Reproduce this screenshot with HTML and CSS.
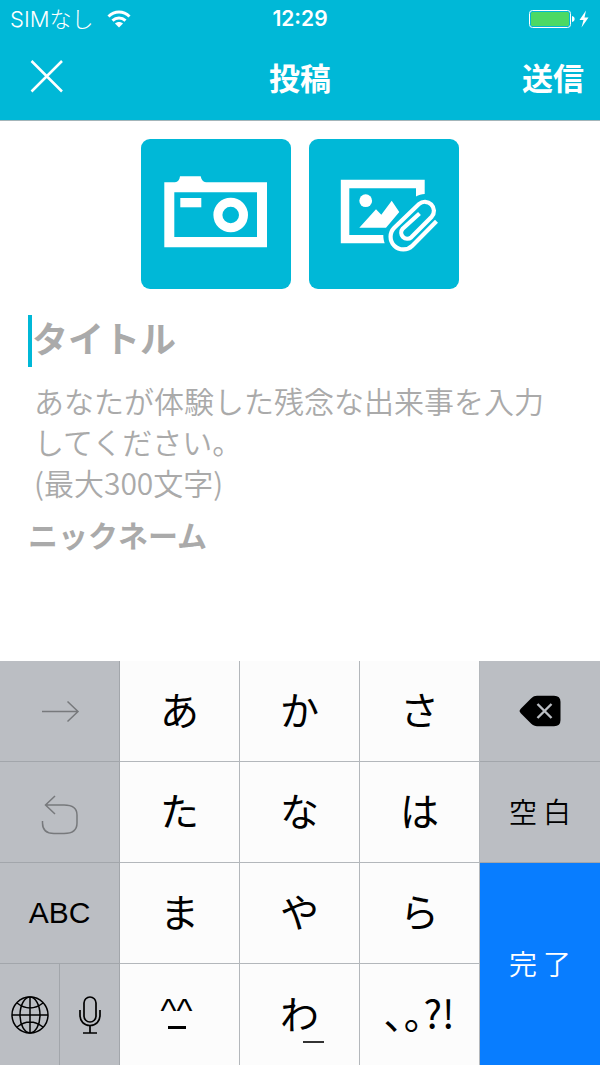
FILE: index.html
```html
<!DOCTYPE html>
<html lang="ja">
<head>
  <meta charset="UTF-8">
  <meta name="viewport" content="width=device-width, initial-scale=1">
  <title>投稿</title>
  <link rel="stylesheet" href="styles.css">
</head>
<body>

  <header class="header">
    <div class="status">
      <div class="carrier">
        <span>SIMなし</span>
        <svg width="24" height="18" viewBox="0 0 24 18" fill="none" stroke="#fff" stroke-width="3">
          <path d="M1.5 6.5C7.5 .6 16.5 .6 22.5 6.5"/>
          <path d="M5.5 10.7C9.3 7.2 14.7 7.2 18.5 10.7"/>
          <path d="M8 13.5C10.3 11.5 13.7 11.5 16 13.5L12 17.5Z" fill="#fff" stroke="none"/>
        </svg>
      </div>
      <span class="time">12:29</span>
      <div class="battery">
        <svg width="62" height="20" viewBox="0 0 62 20">
          <rect x="1.5" y="1.5" width="41" height="17" rx="3" fill="none" stroke="#fff"/>
          <rect x="3" y="3" width="38" height="14" rx="1.5" fill="#4cd964"/>
          <path d="M44 7C47.5 7.5 47.5 12.5 44 13Z" fill="#fff"/>
          <path d="M58 1.5L51.5 11H55.5L53.5 18.5L60.5 8.5H56.5Z" fill="#fff"/>
        </svg>
      </div>
    </div>
    <nav class="nav">
      <button class="nav-btn close" aria-label="閉じる">
        <svg width="34" height="34" viewBox="0 0 34 34" stroke="#fff" stroke-width="2.5"><path d="M1.5 2L32 32.5M32 2L1.5 32.5"/></svg>
      </button>
      <h1>投稿</h1>
      <button class="nav-btn send">送信</button>
    </nav>
  </header>

  <main class="form">
    <div class="photos">
      <button class="photo" aria-label="カメラ">
        <svg width="150" height="150" viewBox="0 0 150 150" fill="#fff">
          <path fill-rule="evenodd" d="M23.3 43.3H34C37 43 38.5 41 39 37.3H59.7C60.5 41 62 43 65 43.3H126V108.3H23.3ZM33.3 53.3V98H116V53.3Z"/>
          <rect x="39.3" y="59" width="21" height="9.3"/>
          <circle cx="89.7" cy="76" r="12.8" fill="none" stroke="#fff" stroke-width="9"/>
        </svg>
      </button>
      <button class="photo" aria-label="画像を添付">
        <svg width="150" height="150" viewBox="0 0 150 150" fill="#fff">
          <path d="M31.8 40.7H115.7V55C112.5 55 109.5 56 107 57.5V49.3H40.3V96H74.3C74.3 99 74.7 101.8 75.7 104.3H31.8Z"/>
          <circle cx="56.7" cy="61.7" r="6.4"/>
          <path d="M50.3 88.7L67 70.3L72.3 75.7L82.7 61.7L90.3 73L77 88.7Z"/>
          <path fill="none" stroke="#fff" stroke-width="4.2" d="M127.5 82.3L103.3 106.7A12.7 12.7 0 0 1 85.3 88.7L110 65A9 9 0 0 1 122.7 77.7L102.3 98.3A6.1 6.1 0 0 1 93.7 89.7L110.5 74.5"/>
        </svg>
      </button>
    </div>

    <input class="title" type="text" placeholder="タイトル" aria-label="タイトル">
    <textarea class="story" rows="3" placeholder="あなたが体験した残念な出来事を入力してください。&#10;(最大300文字)" aria-label="体験した残念な出来事"></textarea>
    <input class="nickname" type="text" placeholder="ニックネーム" aria-label="ニックネーム">
  </main>

  <section class="keyboard">
    <button class="key gray" aria-label="次へ">
      <svg width="40" height="24" viewBox="0 0 40 24" fill="none" stroke="#77797c" stroke-width="1.5"><path d="M2 12.5H38M27.5 2.5L38 12.5L27.5 22.5"/></svg>
    </button>
    <button class="key">あ</button>
    <button class="key">か</button>
    <button class="key">さ</button>
    <button class="key gray last" aria-label="削除">
      <svg width="42" height="32" viewBox="0 0 42 32"><path d="M.5 16C1 14.5 2 13.5 3 12.5L12 3.5C14 1.5 16 .8 18 .8H35Q41.5 .8 41.5 7V25Q41.5 31.2 35 31.2H18C16 31.2 14 30.5 12 28.5L3 19.5C2 18.5 1 17.5 .5 16Z"/><path d="M18.5 9L32.5 23M32.5 9L18.5 23" stroke="#bbbec3" stroke-width="2.4"/></svg>
    </button>

    <button class="key gray" aria-label="元に戻す">
      <svg width="40" height="46" viewBox="0 0 40 46" fill="none" stroke="#77797c" stroke-width="1.5"><path d="M15 7L5.5 16L15 25M5.5 16H24Q37 16 37 26V34Q37 44.5 24 44.5H14Q2.5 44.5 2.5 34V32"/></svg>
    </button>
    <button class="key">た</button>
    <button class="key">な</button>
    <button class="key">は</button>
    <button class="key gray last word">空 白</button>

    <button class="key gray abc">ABC</button>
    <button class="key">ま</button>
    <button class="key">や</button>
    <button class="key">ら</button>
    <button class="key done last word">完 了</button>

    <div class="split">
      <button class="key gray" aria-label="キーボード切替">
        <svg width="38" height="38" viewBox="0 0 38 38" fill="none" stroke="#000" stroke-width="1.5"><circle cx="19" cy="19" r="18"/><ellipse cx="19" cy="19" rx="10" ry="18"/><path d="M19 1V37M1 19H37M6 7Q19 17 32 7M6 31Q19 21 32 31"/></svg>
      </button>
      <button class="key gray" aria-label="音声入力">
        <svg width="22" height="38" viewBox="0 0 22 38" fill="none" stroke="#000" stroke-width="1.7"><rect x="5" y="1" width="12" height="25" rx="6"/><path d="M1 14V19C1 25.5 5 29.5 11 29.5S21 25.5 21 19V14M11 29.5V37M4 37H18"/></svg>
      </button>
    </div>
    <button class="key face" aria-label="顔文字">^^</button>
    <button class="key wa">わ</button>
    <button class="key">､｡?!</button>
  </section>

</body>
</html>
```
FILE: styles.css
```css
* {
  box-sizing: border-box;
}

body {
  margin: 0;
  min-height: 100vh;
  display: flex;
  flex-direction: column;
  background: #fff;
  font-family: "Noto Sans CJK JP", sans-serif;
}

button, input, textarea {
  margin: 0;
  padding: 0;
  border: none;
  border-radius: 0;
  background: none;
  font-family: inherit;
  outline: none;
}

button {
  cursor: pointer;
}

svg {
  display: block;
}

/* header */
.header {
  background: #00b8d7;
  color: #fff;
  border-bottom: 1px solid #a3b5b9;
}

.status {
  height: 38px;
  padding: 0 10px;
  display: grid;
  grid-template-columns: 1fr auto 1fr;
  align-items: center;
  font-family: Inter, "Noto Sans CJK JP", sans-serif;
  line-height: 38px;
}

.carrier {
  display: flex;
  align-items: center;
  gap: 14px;
  font-size: 22px;
  font-weight: 300;
}

.time {
  font-size: 21px;
  font-weight: 600;
}

.battery {
  display: flex;
  justify-content: flex-end;
}

.nav {
  height: 82px;
  padding: 0 16px 6px 30px;
  display: grid;
  grid-template-columns: 1fr auto 1fr;
  align-items: center;
}

.nav h1 {
  margin: 0;
  padding-right: 14px;
  font-size: 31px;
  font-weight: 700;
}

.nav-btn {
  color: #fff;
}

.close {
  justify-self: start;
}

.send {
  justify-self: end;
  font-size: 31px;
  font-weight: 700;
}

/* form */
.form {
  padding: 18px 28px;
  display: flex;
  flex-direction: column;
}

.photos {
  display: flex;
  justify-content: center;
  gap: 18px;
  margin-bottom: 26px;
}

.photo {
  width: 150px;
  height: 150px;
  border-radius: 9px;
  background: #00b8d7;
}

.form ::placeholder {
  color: #aaa;
  opacity: 1;
}

.title {
  height: 52px;
  padding-bottom: 8px;
  border-left: 4px solid #00b8d7;
  font-size: 36px;
  font-weight: 700;
}

.story {
  margin-top: 13px;
  padding-left: 6px;
  resize: none;
  overflow: hidden;
  font-size: 30px;
  font-weight: 350;
  line-height: 41px;
}

.nickname {
  height: 44px;
  margin-top: 9px;
  font-size: 30px;
  font-weight: 700;
}

/* keyboard */
.keyboard {
  margin-top: auto;
  display: grid;
  grid-template-columns: repeat(5, 1fr);
  grid-auto-rows: 101px;
}

.key {
  display: flex;
  align-items: center;
  justify-content: center;
  padding-bottom: 6px;
  border-right: 1px solid #b3b7bb;
  border-bottom: 1px solid #b3b7bb;
  background: #fcfcfc;
  color: #000;
  font-size: 39px;
  line-height: 56px;
}

.gray {
  padding-bottom: 0;
  background: #bbbec3;
  border-color: #a2a6ab;
}

.last {
  border-right: none;
}

.word {
  padding-bottom: 2px;
  font-size: 28px;
  font-weight: 350;
}

.abc {
  font-family: "Liberation Sans", Arial, sans-serif;
  font-size: 30px;
}

.done {
  grid-column: 5;
  grid-row: 3 / 5;
  background: #087dff;
  color: #fff;
}

.split {
  display: grid;
  grid-template-columns: 1fr 1fr;
}

.done,
.split .key,
.split ~ .key {
  border-bottom: none;
}

.face {
  flex-direction: column;
  padding-right: 6px;
  font-family: "Liberation Sans", Arial, sans-serif;
  font-size: 34px;
  line-height: 32px;
}

/* short bars under the characters */
.face::after {
  content: "";
  width: 18px;
  height: 3px;
  background: #000;
}

.wa {
  position: relative;
}

.wa::after {
  content: "";
  position: absolute;
  left: 63px;
  bottom: 22px;
  width: 21px;
  height: 2px;
  background: #333;
}
```
